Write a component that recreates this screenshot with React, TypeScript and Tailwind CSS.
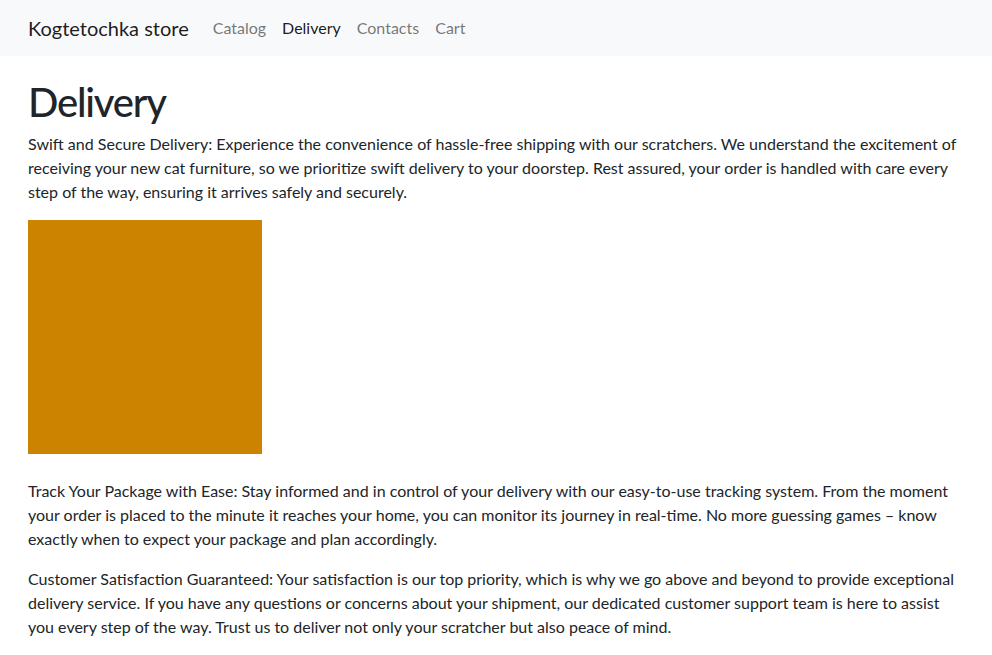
const navLinks = [
  { label: "Catalog", active: false },
  { label: "Delivery", active: true },
  { label: "Contacts", active: false },
  { label: "Cart", active: false },
]

const Navbar = () => {
  return (
    <nav className="bg-[#f8f9fa] h-14 flex items-center px-[28px]">
      <span className="text-[20px] leading-[30px] text-black/90 mr-4">Kogtetochka store</span>
      <ul className="flex">
        {navLinks.map((link) => (
          <li key={link.label}>
            <a
              href="#"
              className={`block px-2 py-2 text-base leading-6 ${link.active ? "text-black/90" : "text-black/55"}`}>
              {link.label}
            </a>
          </li>
        ))}
      </ul>
    </nav>
  )
}

const App = () => {
  return (
    <div className="min-h-[655px] bg-white text-[#212529] font-['Segoe_UI',Lato,'Liberation_Sans',sans-serif]">
      <Navbar />
      <main className="px-[28px] pt-[22px]">
        <h1 className="text-[40px] leading-[48px] font-medium tracking-[-1.2px] mb-[6px]">Delivery</h1>
        <p className="text-base leading-6 mb-4">
          Swift and Secure Delivery: Experience the convenience of hassle-free shipping with our scratchers. We understand the excitement of receiving your new cat furniture, so we prioritize swift delivery to your doorstep. Rest assured, your order is handled with care every step of the way, ensuring it arrives safely and securely.
        </p>
        <div className="w-[234px] h-[234px] bg-[#cc8400] mb-[25px]" />
        <p className="text-base leading-6 mb-4">
          Track Your Package with Ease: Stay informed and in control of your delivery with our easy-to-use tracking system. From the moment your order is placed to the minute it reaches your home, you can monitor its journey in real-time. No more guessing games – know exactly when to expect your package and plan accordingly.
        </p>
        <p className="text-base leading-6 mb-4">
          Customer Satisfaction Guaranteed: Your satisfaction is our top priority, which is why we go above and beyond to provide exceptional delivery service. If you have any questions or concerns about your shipment, our dedicated customer support team is here to assist you every step of the way. Trust us to deliver not only your scratcher but also peace of mind.
        </p>
      </main>
    </div>
  )
}

export default App
